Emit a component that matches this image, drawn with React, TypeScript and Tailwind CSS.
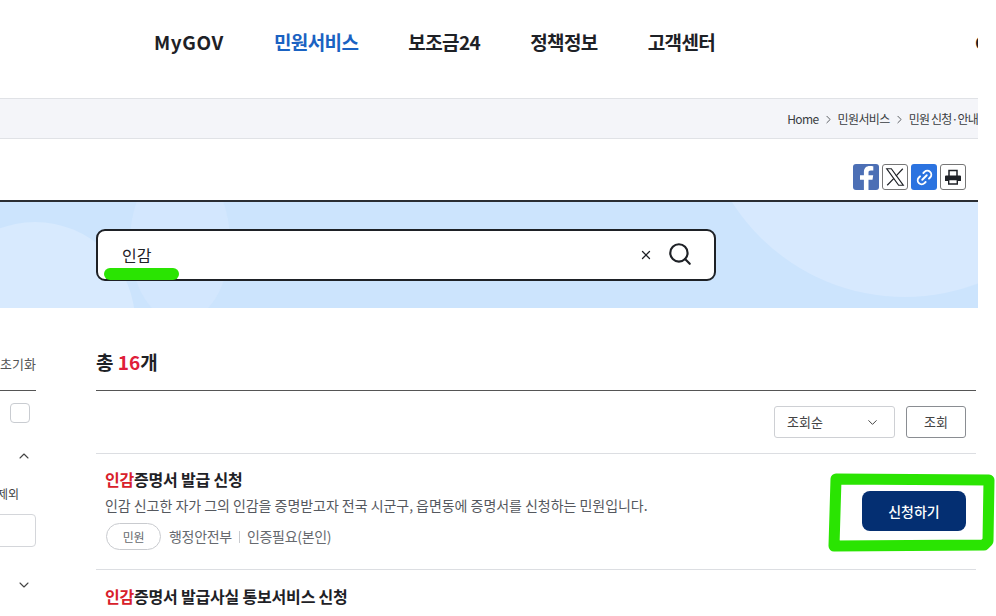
import React from 'react'
import { ChevronDown, ChevronRight, ChevronUp, Link2, Search, X } from 'lucide-react'

const font = 'font-["Noto_Sans_CJK_KR","Noto_Sans",sans-serif]'

const nav = ['MyGOV', '민원서비스', '보조금24', '정책정보', '고객센터']

const Header: React.FC = () => (
  <header className="h-[99px] border-b border-[#e0e2e6] bg-white relative overflow-hidden">
    <nav className="flex gap-[50px] pl-[154px] pt-[28px]">
      {nav.map((item, index) => (
        <span
          key={item}
          className={`text-[19px] leading-[28px] font-bold ${index === 0 ? 'tracking-[0.6px]' : 'tracking-[-0.6px]'} ${index === 1 ? 'text-[#1a62c2]' : 'text-[#1e2126]'}`}
        >
          {item}
        </span>
      ))}
    </nav>
    <span className="absolute left-[975px] top-[28px] w-[3px] overflow-hidden text-[19px] leading-[28px] font-bold text-[#1e2126]">C</span>
  </header>
)

const Breadcrumb: React.FC = () => (
  <div className="h-[40px] border-b border-[#e0e2e6] bg-[#f4f5f9] flex items-center justify-end text-[12px] tracking-[-0.6px] text-[#3a3d42] whitespace-nowrap overflow-hidden">
    <span>Home</span>
    <ChevronRight className="w-[13px] h-[13px] mx-[3px] mt-[2px]" strokeWidth={1.5} />
    <span>민원서비스</span>
    <ChevronRight className="w-[13px] h-[13px] mx-[3px] mt-[2px]" strokeWidth={1.5} />
    <span className="tracking-[-0.8px]">민원 신청·안내</span>
  </div>
)

const ShareBar: React.FC = () => (
  <div className="h-[61px] flex justify-end items-start gap-[3px] pt-[25px] pr-[12px]">
    <span className="w-[26px] h-[26px] rounded-[3px] bg-[#4c6fb5] overflow-hidden">
      <svg viewBox="0 0 26 26" className="w-[26px] h-[26px]">
        <path
          fill="#fff"
          d="M15.500 26V15.800h4l.7-4.600h-4.700V8.600c0-1.300.5-2.200 2.300-2.200h2.500V2.300c-.7-.1-2-.3-3.500-.3-3.600 0-5.900 2.100-5.900 6v3.200H7v4.600h3.900V26z"
        />
      </svg>
    </span>
    <span className="w-[26px] h-[26px] rounded-[3px] border border-[#767676] bg-white flex items-center justify-center">
      <svg viewBox="0 0 24 24" className="w-[22px] h-[22px]" fill="none" stroke="#1e2126" strokeWidth="1.300">
        <path d="M3 3h5l13 18h-5z" />
        <path d="M20.500 3l-7.500 8M10.800 13.500L3.500 21" />
      </svg>
    </span>
    <span className="w-[26px] h-[26px] rounded-[3px] bg-[#2b73e0] flex items-center justify-center">
      <Link2 className="w-[19px] h-[19px] text-white -rotate-45" strokeWidth={2.4} />
    </span>
    <span className="w-[26px] h-[26px] rounded-[3px] border border-[#767676] bg-white flex items-center justify-center">
      <svg viewBox="0 0 18 18" className="w-[18px] h-[18px]" fill="none">
        <path d="M5 8V2.500h8V8" stroke="#1e2126" strokeWidth="1.500" />
        <path d="M1 8.500a1 1 0 0 1 1-1h14a1 1 0 0 1 1 1V13h-3v-2H4v2H1z" fill="#1e2126" />
        <path d="M4.700 11.500h8.600v4.500H4.700z" stroke="#1e2126" strokeWidth="1.400" />
      </svg>
    </span>
  </div>
)

const SearchBand: React.FC = () => (
  <section className="relative h-[108px] border-t-2 border-[#2a2d33] bg-[#cce4fd] overflow-hidden pt-[27px] pl-[96px]">
    <div className="absolute left-[-65px] top-[20px] w-[200px] h-[200px] rounded-full bg-[#d8eafe]" />
    <div className="absolute left-[130px] top-[-40px] w-[100px] h-[160px] rounded-[50%] bg-[#d3e7fe]" />
    <div className="absolute left-[700px] top-[-315px] w-[410px] h-[410px] rounded-full bg-[#d7e9fe]" />
    <div className="relative w-[620px] h-[52px] rounded-[9px] border-2 border-[#1e2126] bg-white flex items-center">
      <span className="pl-[24px] text-[16px] text-[#1e2126]">인감</span>
      <X className="w-[14px] h-[14px] ml-auto text-[#1e2126]" strokeWidth={2.2} />
      <Search className="w-[26px] h-[26px] ml-[14px] mr-[21px] mb-[2px] text-[#1e2126]" strokeWidth={2} />
    </div>
  </section>
)

const FilterPane: React.FC = () => (
  <aside className="w-[36px] shrink-0 relative">
    <div className="h-[83px] border-b border-[#555] flex justify-end items-start pt-[46px] text-[13px] leading-[20px] text-[#555] whitespace-nowrap">
      초기화
    </div>
    <div className="flex justify-end pt-[12px] pr-[6px]">
      <span className="w-[20px] h-[20px] rounded-[4px] border border-[#c9ccd1] bg-white" />
    </div>
    <div className="flex justify-end pt-[25px] pr-[4px]">
      <ChevronUp className="w-[16px] h-[16px] text-[#444]" strokeWidth={1.6} />
    </div>
    <div className="pt-[22px] ml-[-3px] text-[12px] leading-[16px] text-[#444] whitespace-nowrap">제외</div>
    <div className="mt-[12px] ml-[-8px] w-[44px] h-[33px] rounded-[4px] border border-[#d4d6da] bg-white" />
    <div className="flex justify-end pt-[30px] pr-[4px]">
      <ChevronDown className="w-[16px] h-[16px] text-[#444]" strokeWidth={1.6} />
    </div>
  </aside>
)

const ResultItem: React.FC<{ rest: string }> = ({ rest }) => (
  <p className="text-[16px] leading-[22px] font-semibold text-[#1e2126] tracking-[-0.2px]">
    <span className="text-[#d8202a]">인감</span>
    {rest}
  </p>
)

const Results: React.FC = () => (
  <main className="w-[880px] ml-[60px] shrink-0">
    <div className="h-[83px] border-b border-[#555] pt-[40px]">
      <h2 className="text-[19px] leading-[28px] font-bold text-[#1e2126]">
        총 <span className="text-[#e0203a]">16</span>개
      </h2>
    </div>
    <div className="h-[63px] border-b border-[#dcdee2] flex justify-end items-start gap-[11px] pt-[15px] pr-[10px]">
      <div className="w-[121px] h-[32px] rounded-[3px] border border-[#ced0d4] flex items-center justify-between pl-[12px] pr-[14px] text-[13px] text-[#444]">
        조회순
        <ChevronDown className="w-[15px] h-[15px] text-[#444]" strokeWidth={1.6} />
      </div>
      <button className="w-[60px] h-[32px] rounded-[3px] border border-[#8a8d92] bg-white text-[13px] text-[#444]">
        조회
      </button>
    </div>
    <article className="h-[116px] border-b border-[#dcdee2] pl-[9px] pr-[10px] pt-[14px] flex justify-between">
      <div>
        <ResultItem rest="증명서 발급 신청" />
        <p className="text-[14px] leading-[20px] mt-[5px] text-[#55585e] tracking-[-0.04px] whitespace-nowrap">
          인감 신고한 자가 그의 인감을 증명받고자 전국 시군구, 읍면동에 증명서를 신청하는 민원입니다.
        </p>
        <div className="flex items-center mt-[8px] text-[14px] tracking-[-0.3px] text-[#66696e]">
          <span className="ml-[1px] w-[55px] h-[27px] rounded-full border border-[#c9cbcf] flex items-center justify-center text-[12px]">
            민원
          </span>
          <span className="ml-[8px]">행정안전부</span>
          <span className="w-px h-[12px] bg-[#c9cbcf] mx-[7px]" />
          <span>인증필요(본인)</span>
        </div>
      </div>
      <button className="mt-[23px] w-[104px] h-[40px] rounded-[8px] bg-[#042f72] text-white text-[14px] font-medium">
        신청하기
      </button>
    </article>
    <article className="pl-[9px] pt-[15px]">
      <ResultItem rest="증명서 발급사실 통보서비스 신청" />
    </article>
  </main>
)

const App: React.FC = () => {
  return (
    <div className={`relative w-[996px] h-[616px] overflow-hidden bg-white ${font}`}>
      <div className="w-[978px]">
        <Header />
        <Breadcrumb />
        <ShareBar />
        <SearchBand />
        <div className="flex">
          <FilterPane />
          <Results />
        </div>
      </div>

      {/* hand drawn green marks on top of the screenshot */}
      <div className="absolute left-[104px] top-[268px] w-[75px] h-[12px] rounded-full bg-[#2ae402]" />
      <svg className="absolute left-0 top-0 w-[996px] h-[616px] pointer-events-none" viewBox="0 0 996 616" fill="none">
        <path
          d="M836 479 L989 480 L988 541 L984 545 L834 546 Z"
          stroke="#2ae402"
          strokeWidth="11"
          strokeLinejoin="round"
        />
      </svg>
    </div>
  )
}

export default App
